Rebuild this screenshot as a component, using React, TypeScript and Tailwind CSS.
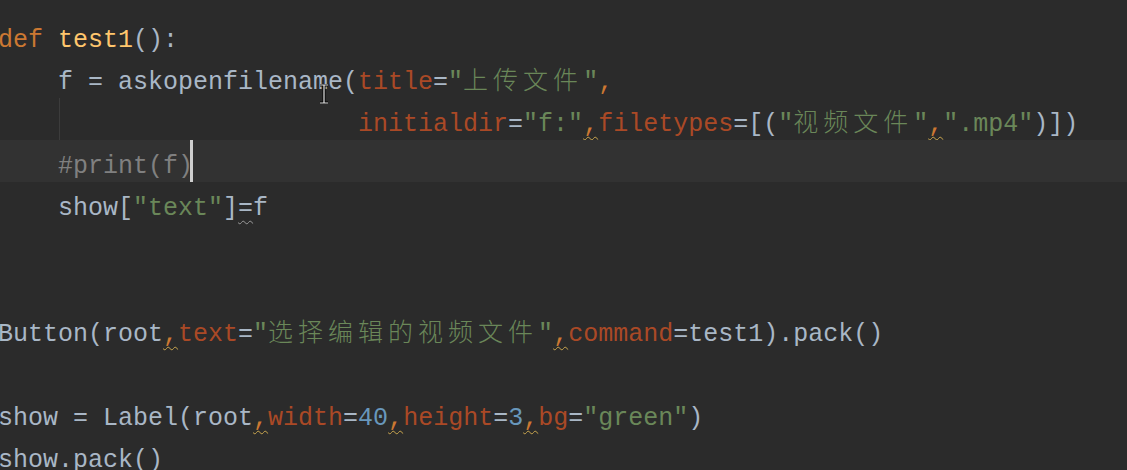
import React from "react";

type Tok = { t: string; c: string; cjk?: boolean; wave?: string };

const KW = "text-[#cc7832]";
const FN = "text-[#ffc66d]";
const DF = "text-[#a9b7c6]";
const PM = "text-[#aa4926]";
const ST = "text-[#6a8759]";
const NM = "text-[#6897bb]";
const CM = "text-[#808080]";
const CO = "text-[#cc7832]";

const t = (s: string, c: string = DF): Tok => ({ t: s, c });
const z = (s: string, c: string = ST): Tok => ({ t: s, c, cjk: true });
const w = (s: string, c: string = CO, wave = "yellow"): Tok => ({ t: s, c, wave });

const lines: Tok[][] = [
  [t("def", KW), t(" "), t("test1", FN), t("():")],
  [t("    f = askopenfilename("), t("title", PM), t("="), t('"', ST), z("上传文件"), t('"', ST), t(",", CO)],
  [
    t("                        "),
    t("initialdir", PM),
    t("="),
    t('"f:"', ST),
    w(","),
    t("filetypes", PM),
    t("=[("),
    t('"', ST),
    z("视频文件"),
    t('"', ST),
    w(","),
    t('".mp4"', ST),
    t(")])"),
  ],
  [t("    "), t("#print(f)", CM)],
  [t("    show["), t('"text"', ST), t("]"), w("=", DF, "gray"), t("f")],
  [],
  [],
  [
    t("Button(root"),
    w(","),
    t("text", PM),
    t("="),
    t('"', ST),
    z("选择编辑的视频文件"),
    t('"', ST),
    w(","),
    t("command", PM),
    t("=test1).pack()"),
  ],
  [],
  [
    t("show = Label(root"),
    w(","),
    t("width", PM),
    t("="),
    t("40", NM),
    w(","),
    t("height", PM),
    t("="),
    t("3", NM),
    w(","),
    t("bg", PM),
    t("="),
    t('"green"', ST),
    t(")"),
  ],
  [t("show.pack()")],
];

function Token({ tok }: { tok: Tok }) {
  if (tok.cjk) {
    return (
      <span
        className={`${tok.c} font-['Noto_Sans_CJK_SC',sans-serif] text-[25px] leading-[0px] tracking-[5px] font-light`}
      >
        {tok.t}
      </span>
    );
  }
  if (tok.wave) {
    const dec =
      tok.wave === "gray"
        ? "decoration-[#9a9a9a]"
        : "decoration-[#c9a64e]";
    return (
      <span
        className={`${tok.c} underline decoration-wavy ${dec} decoration-1 underline-offset-[5px]`}
      >
        {tok.t}
      </span>
    );
  }
  return <span className={tok.c}>{tok.t}</span>;
}

export default function App() {
  return (
    <div className="w-[1127px] h-[470px] overflow-hidden bg-[#2b2b2b] font-['Liberation_Mono',monospace] text-[25px] relative">
      <div className="pt-[14px] flex flex-col">
        {lines.map((toks, i) => (
          <div
            key={i}
            className={`relative h-[42px] shrink-0 ${i === 3 ? "bg-[#323232]" : ""}`}
          >
            {i === 2 && (
              <div className="absolute left-[59px] top-0 w-px h-[42px] bg-[#3c3c3c]" />
            )}
            <div className="whitespace-pre leading-[30px] pt-[12px] ml-[-2px] h-[42px]">
              {toks.map((tok, j) => (
                <Token key={j} tok={tok} />
              ))}
            </div>
            {i === 3 && (
              <div className="absolute left-[190px] top-0 w-[3px] h-[42px] bg-[#cfcfcf]" />
            )}
          </div>
        ))}
      </div>
      <svg
        className="absolute left-[318px] top-[84px]"
        width="12"
        height="20"
        viewBox="0 0 12 20"
      >
        <path d="M2 1h8M6 1v18M2 19h8" stroke="#000" strokeWidth="3" fill="none" />
        <path d="M2 1h8M6 1v18M2 19h8" stroke="#e8e8e8" strokeWidth="1.2" fill="none" />
      </svg>
    </div>
  );
}
